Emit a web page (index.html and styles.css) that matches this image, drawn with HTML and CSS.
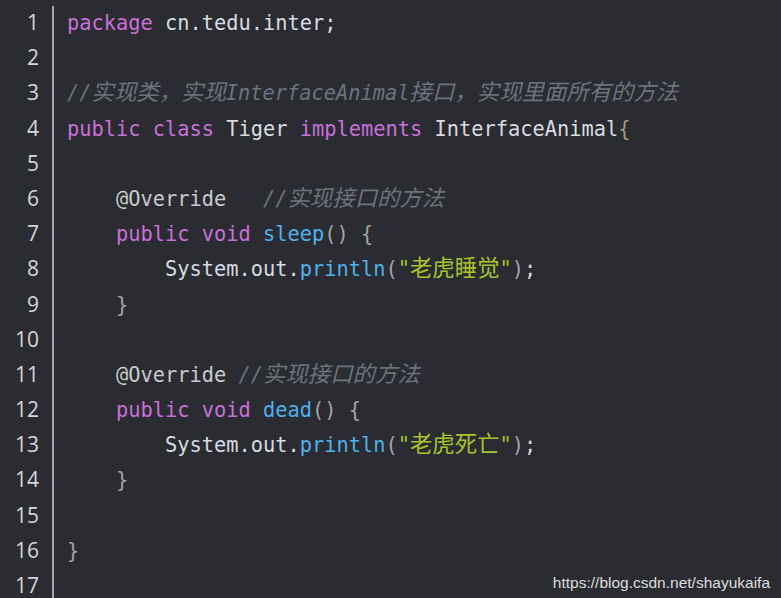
FILE: index.html
```html
<!DOCTYPE html>
<html lang="zh">
<head>
<meta charset="utf-8">
<title>Tiger.java</title>
<link rel="stylesheet" href="styles.css">
</head>
<body>
<div class="editor">
  <div class="gutter">
    <div class="ln">1</div><div class="ln">2</div><div class="ln">3</div><div class="ln">4</div>
    <div class="ln">5</div><div class="ln">6</div><div class="ln">7</div><div class="ln">8</div>
    <div class="ln">9</div><div class="ln">10</div><div class="ln">11</div><div class="ln">12</div>
    <div class="ln">13</div><div class="ln">14</div><div class="ln">15</div><div class="ln">16</div>
    <div class="ln">17</div>
  </div>
  <div class="code">
    <div class="line"><span class="kw">package</span> cn.tedu.inter;</div>
    <div class="line"> </div>
    <div class="line"><span class="cm">//<span class="zh">实现类，实现</span>InterfaceAnimal<span class="zh">接口，实现里面所有的方法</span></span></div>
    <div class="line"><span class="kw">public</span> <span class="kw">class</span> Tiger <span class="kw">implements</span> InterfaceAnimal<span class="br1">{</span></div>
    <div class="line"> </div>
    <div class="line">    <span class="an">@Override</span>   <span class="cm">//<span class="zh">实现接口的方法</span></span></div>
    <div class="line">    <span class="kw">public</span> <span class="kw">void</span> <span class="fn">sleep</span><span class="br">()</span> <span class="br">{</span></div>
    <div class="line">        System.out.<span class="fn">println</span><span class="br">(</span><span class="str">"<span class="zh">老虎睡觉</span>"</span><span class="br">)</span>;</div>
    <div class="line">    <span class="br">}</span></div>
    <div class="line"> </div>
    <div class="line">    <span class="an">@Override</span> <span class="cm">//<span class="zh">实现接口的方法</span></span></div>
    <div class="line">    <span class="kw">public</span> <span class="kw">void</span> <span class="fn">dead</span><span class="br">()</span> <span class="br">{</span></div>
    <div class="line">        System.out.<span class="fn">println</span><span class="br">(</span><span class="str">"<span class="zh">老虎死亡</span>"</span><span class="br">)</span>;</div>
    <div class="line">    <span class="br">}</span></div>
    <div class="line"> </div>
    <div class="line"><span class="br">}</span></div>
    <div class="line"> </div>
  </div>
</div>
<div class="watermark">https://blog.csdn.net/shayukaifa</div>
</body>
</html>
```

FILE: styles.css
```css
html, body {
  margin: 0;
  padding: 0;
  background: #2a2c31;
  height: 100%;
  overflow: hidden;
}

.editor {
  display: flex;
  padding-top: 6px;
  height: 100%;
  box-sizing: border-box;
}

.gutter {
  width: 39px;
  flex: none;
  text-align: right;
  font-family: "Open Sans", "Noto Sans", sans-serif;
  font-size: 21px;
  color: #d6d6d6;
  margin-top: -1px;
}

.ln {
  height: 35.2px;
  line-height: 35.2px;
}

.code {
  margin-left: 13px;
  border-left: 2px solid #a9a9a9;
  padding-left: 13px;
  flex: 1;
  font-family: "DejaVu Sans Mono", "Liberation Mono", "Noto Sans CJK SC", monospace;
  font-size: 20.35px;
  color: #d8dbe0;
}

.line {
  white-space: pre;
  height: 35.2px;
  line-height: 35.2px;
}

.zh {
  font-family: "Noto Sans CJK SC", sans-serif;
  font-size: 22.4px;
  line-height: 1;
}

.kw { color: #c870d8; }
.fn { color: #4fb0ea; }
.str { color: #a7c22d; }
.cm { color: #6d737e; font-style: italic; }
.an { color: #c9c9c9; }
.br { color: #a4a4a4; }
.br1 { color: #a8957e; }

.watermark {
  position: absolute;
  right: 11px;
  bottom: 6px;
  font-family: "Liberation Sans", Arial, sans-serif;
  font-size: 15.5px;
  color: #dedede;
}
```
